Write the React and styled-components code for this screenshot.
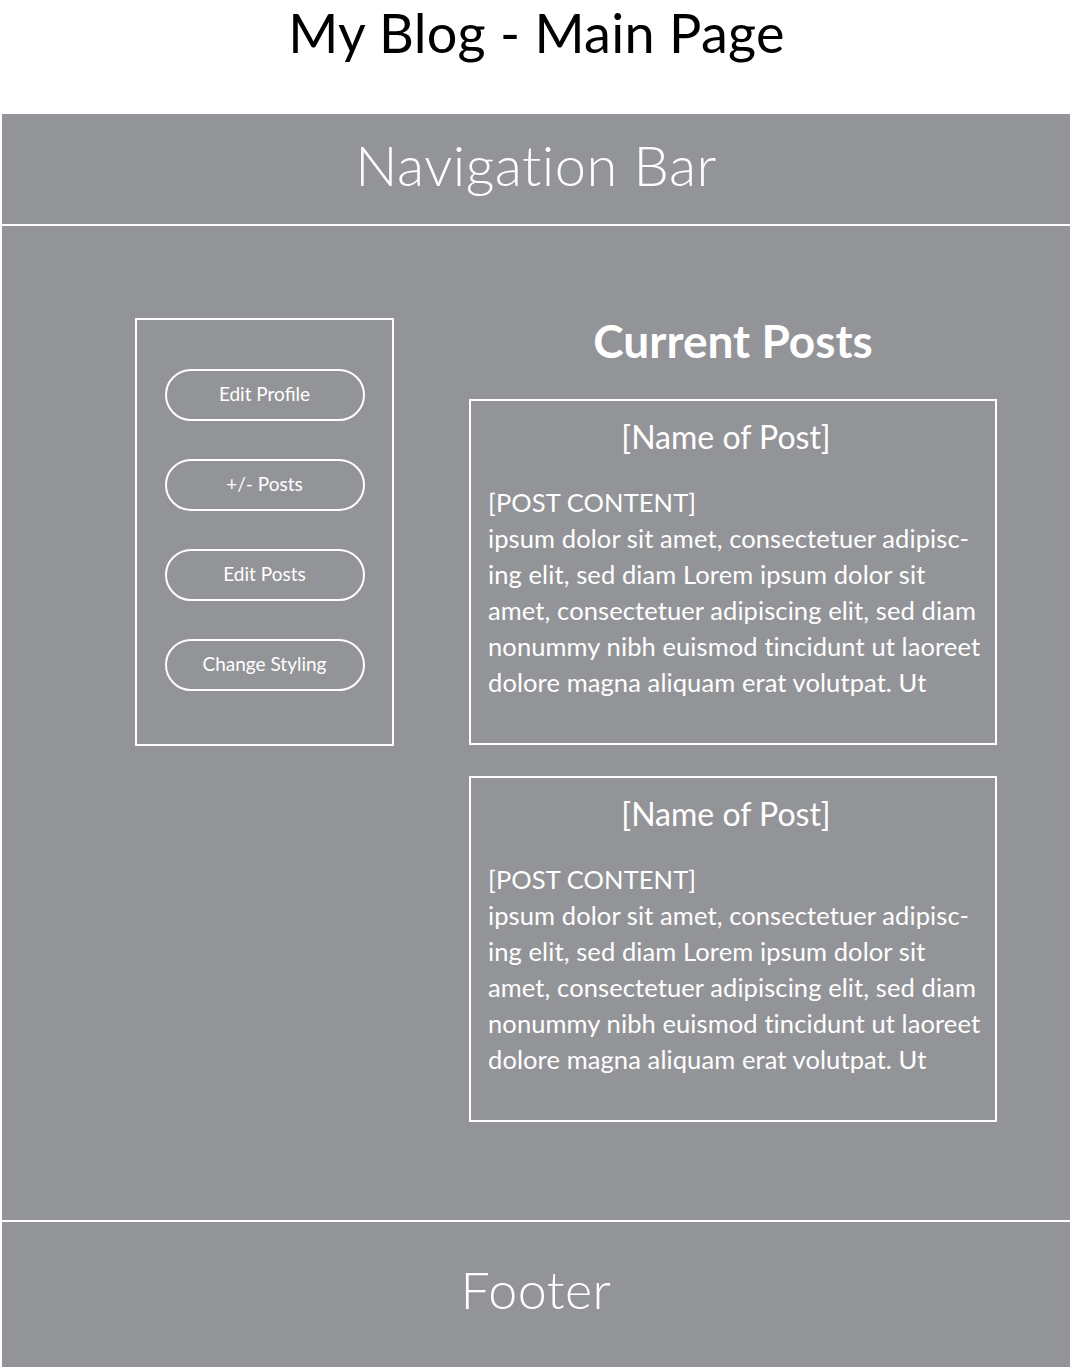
import React from "react";
import styled, { createGlobalStyle } from "styled-components";

const Global = createGlobalStyle`
  html, body { margin: 0; padding: 0; background: #ffffff; }
  body { font-family: "Lato", "Open Sans", sans-serif; }
`;

const Page = styled.div`
  width: 1068px;
  margin-left: 2px;
  display: flex;
  flex-direction: column;
  gap: 2px;
`;

const Title = styled.h1`
  margin: 0;
  height: 114px;
  display: flex;
  justify-content: center;
  font-size: 54px;
  font-weight: 400;
  line-height: 66px;
  color: #000;
  letter-spacing: 0.3px;
`;

const Band = styled.div`
  background: #939498;
  color: #fff;
  height: ${(p) => p.$h}px;
  box-sizing: border-box;
  padding-bottom: ${(p) => p.$lift}px;
  display: flex;
  align-items: center;
  justify-content: center;
  font-size: ${(p) => p.$size}px;
  font-weight: 300;
  letter-spacing: 0.5px;
`;

const Main = styled.main`
  background: #939498;
  height: 994px;
  box-sizing: border-box;
  padding: 92px 0 0 133px;
  display: flex;
  align-items: flex-start;
  gap: 75px;
`;

const Sidebar = styled.nav`
  width: 259px;
  box-sizing: border-box;
  border: 2px solid #fff;
  padding: 49px 0 53px;
  display: flex;
  flex-direction: column;
  align-items: center;
  gap: 38px;
`;

const PillButton = styled.button`
  width: 200px;
  height: 52px;
  box-sizing: border-box;
  border: 2px solid #fff;
  border-radius: 26px;
  background: transparent;
  color: #fff;
  font-family: inherit;
  font-size: 19px;
  font-weight: 400;
  padding: 0 0 4px;
  cursor: pointer;
`;

const Posts = styled.section`
  width: 528px;
  display: flex;
  flex-direction: column;
`;

const Heading = styled.h2`
  margin: 0 0 30px;
  text-align: center;
  font-size: 46px;
  font-weight: 700;
  line-height: 46px;
  color: #fff;
  height: 51px;
`;

const PostList = styled.div`
  display: flex;
  flex-direction: column;
  gap: 31px;
`;

const PostCard = styled.article`
  height: 346px;
  box-sizing: border-box;
  border: 2px solid #fff;
  padding: 14px 17px 0;
  color: #fff;
`;

const PostTitle = styled.h3`
  margin: 0 0 25px;
  padding-right: 14px;
  text-align: center;
  font-size: 32px;
  font-weight: 400;
  line-height: 44px;
`;

const PostBody = styled.p`
  margin: 0;
  font-size: 25.5px;
  line-height: 36px;
  white-space: nowrap;
  letter-spacing: 0.1px;
`;

const buttons = ["Edit Profile", "+/- Posts", "Edit Posts", "Change Styling"];

const lines = [
  "[POST CONTENT]",
  "ipsum dolor sit amet, consectetuer adipisc-",
  "ing elit, sed diam Lorem ipsum dolor sit",
  "amet, consectetuer adipiscing elit, sed diam",
  "nonummy nibh euismod tincidunt ut laoreet",
  "dolore magna aliquam erat volutpat. Ut",
];

function Post() {
  return (
    <PostCard>
      <PostTitle>[Name of Post]</PostTitle>
      <PostBody>
        {lines.map((l, i) => (
          <React.Fragment key={i}>
            {l}
            {i < lines.length - 1 && <br />}
          </React.Fragment>
        ))}
      </PostBody>
    </PostCard>
  );
}

export default function App() {
  return (
    <>
      <Global />
      <Title>My Blog - Main Page</Title>
      <Page>
        <Band $h={110} $size={56} $lift={10}>Navigation Bar</Band>
        <Main>
          <Sidebar>
            {buttons.map((b) => (
              <PillButton key={b}>{b}</PillButton>
            ))}
          </Sidebar>
          <Posts>
            <Heading>Current Posts</Heading>
            <PostList>
              <Post />
              <Post />
            </PostList>
          </Posts>
        </Main>
        <Band $h={145} $size={52} $lift={12}>Footer</Band>
      </Page>
    </>
  );
}
